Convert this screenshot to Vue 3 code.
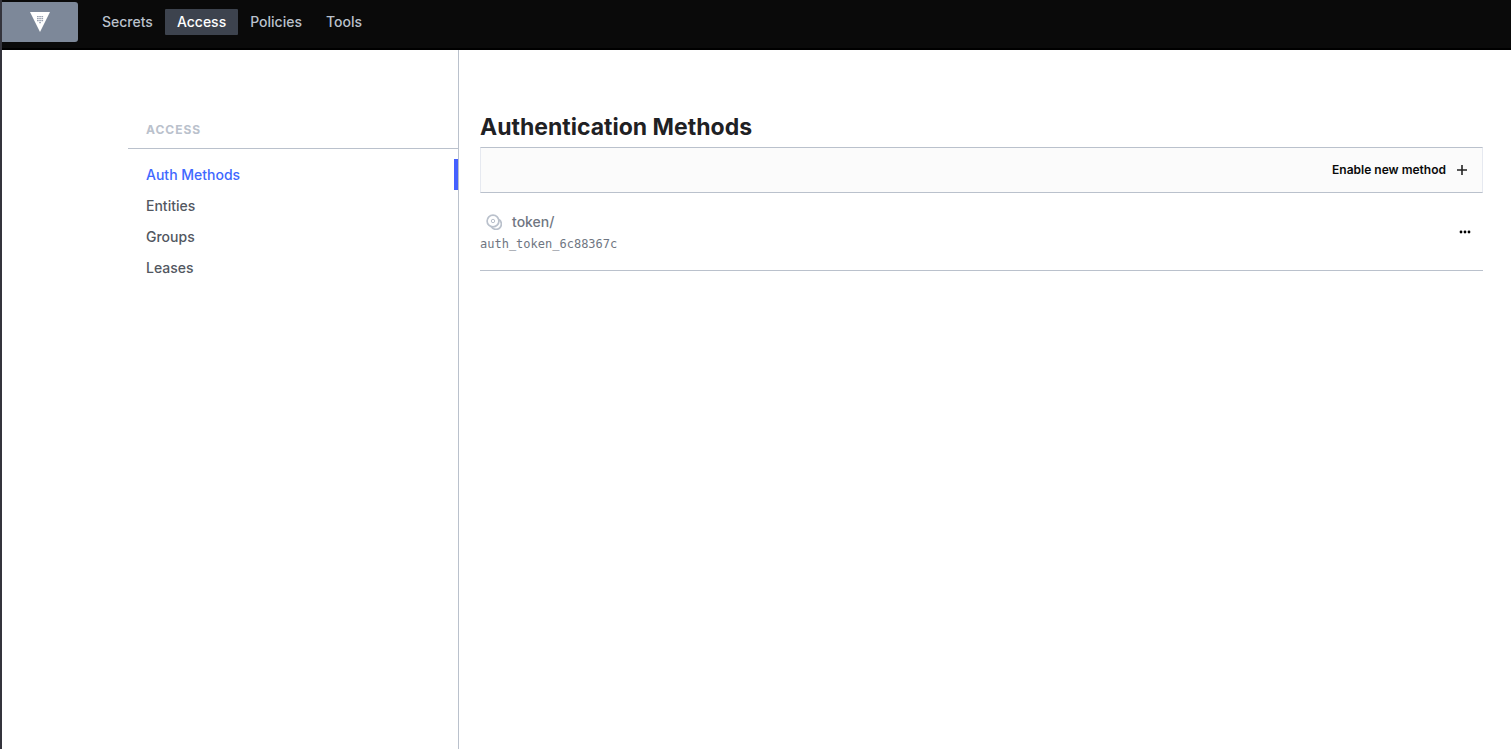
<script setup>
const topLinks = ['Secrets', 'Access', 'Policies', 'Tools']
const sideLinks = ['Auth Methods', 'Entities', 'Groups', 'Leases']
const methods = [{ path: 'token/', accessor: 'auth_token_6c88367c' }]
</script>

<template>
  <div class="app">
    <header class="topbar">
      <a href="#" class="logo" aria-label="Vault home">
        <svg width="20" height="20" viewBox="0 0 20 20" aria-hidden="true">
          <path d="M0 0H20L10 20Z" fill="#fff" />
          <path
            fill="#9aa2b1"
            d="M7 4h1.7v1.2H7zM9.200 4h1.7v1.2H9.200zM11.400 4h1.7v1.2h-1.7zM7 6h1.7v1.2H7zM9.200 6h1.7v1.2H9.200zM11.400 6h1.7v1.2h-1.7zM7 8h1.7v1.2H7zM9.200 8h1.7v1.2H9.200zM11.400 8h1.7v1.2h-1.7zM9.200 10h1.7v1.2H9.200z"
          />
        </svg>
      </a>
      <nav class="topnav" aria-label="Primary">
        <a v-for="l in topLinks" :key="l" href="#" :class="{ active: l === 'Access' }">{{ l }}</a>
      </nav>
    </header>
    <div class="body">
      <aside class="sidebar">
        <h2 class="side-title">Access</h2>
        <nav class="sidenav" aria-label="Access">
          <a v-for="l in sideLinks" :key="l" href="#" :class="{ active: l === 'Auth Methods' }">{{ l }}</a>
        </nav>
      </aside>
      <main class="main">
        <h1>Authentication Methods</h1>
        <div class="toolbar">
          <a href="#" class="enable">
            <span>Enable new method</span>
            <svg width="10" height="10" viewBox="0 0 10 10" aria-hidden="true">
              <path d="M5 0V10M0 5H10" stroke="#222" stroke-width="1.6" />
            </svg>
          </a>
        </div>
        <div v-for="m in methods" :key="m.path" class="row">
          <div class="info">
            <a href="#" class="path">
              <svg width="16" height="16" viewBox="0 0 16 16" fill="none" stroke="#bac1cc" aria-hidden="true">
                <circle cx="7" cy="7" r="5.9" stroke-width="1.7" />
                <circle cx="7" cy="7" r="1.7" stroke-width="1" />
                <path d="M13 5.500A5.400 5.400 0 1 1 5.500 13" stroke-width="1.7" />
              </svg>
              <span>{{ m.path }}</span>
            </a>
            <code>{{ m.accessor }}</code>
          </div>
          <button type="button" class="more" aria-label="More options">
            <svg width="12" height="4" viewBox="0 0 12 4" aria-hidden="true">
              <circle cx="2" cy="2" r="1.4" /><circle cx="6" cy="2" r="1.4" /><circle cx="10" cy="2" r="1.4" />
            </svg>
          </button>
        </div>
      </main>
    </div>
  </div>
</template>

<style>
body {
  background: #fff;
}
</style>

<style scoped>
.app {
  display: flex;
  flex-direction: column;
  box-sizing: border-box;
  min-height: 100vh;
  border-left: 2px solid #34343c;
  font-family: Inter, "Liberation Sans", sans-serif;
  font-size: 14px;
  font-weight: 500;
  line-height: 21px;
}
a {
  color: inherit;
  text-decoration: none;
}
.topbar {
  display: flex;
  box-sizing: border-box;
  height: 50px;
  padding-top: 2px;
  background: #0a0a0a;
  border-bottom: 2px solid #000;
}
.logo {
  display: flex;
  align-items: center;
  justify-content: center;
  width: 76px;
  height: 40px;
  background: #7d8899;
  border-radius: 0 3px 3px 0;
}
.topnav {
  display: flex;
  align-items: flex-start;
  padding: 7px 12px;
}
.topnav a {
  padding: 0 12px;
  color: #bac1cc;
  line-height: 26px;
  border-radius: 1px;
}
.topnav .active {
  background: #3d434e;
  color: #fff;
}
.body {
  display: flex;
  flex: 1;
}
.sidebar {
  flex: none;
  box-sizing: border-box;
  width: 457px;
  padding: 69px 0 0 126px;
  border-right: 1px solid #bac1cc;
}
.side-title {
  margin: 0;
  padding: 0 18px 8px;
  border-bottom: 1px solid #bac1cc;
  color: #bac1cc;
  font-size: 12px;
  font-weight: 700;
  letter-spacing: 1px;
  text-transform: uppercase;
}
.sidenav {
  display: flex;
  flex-direction: column;
  padding-top: 10px;
}
.sidenav a {
  padding: 0 14px 0 18px;
  border-right: 4px solid transparent;
  color: #525761;
  line-height: 31px;
}
.sidenav .active {
  border-right-color: #4561ff;
  color: #4068ff;
}
.main {
  flex: 1;
  padding: 62px 28px 0 21px;
}
h1 {
  margin: 0;
  padding-bottom: 5px;
  color: #1f2124;
  font-size: 23px;
  font-weight: 700;
  line-height: 30px;
}
.toolbar {
  display: flex;
  align-items: center;
  justify-content: flex-end;
  height: 44px;
  padding: 0 15px;
  background: #fbfbfb;
  border: 1px solid #bac1cc;
  border-right-color: #e6e9f0;
  border-left-color: #e6e9f0;
}
.enable {
  display: flex;
  align-items: center;
  gap: 11px;
  color: #0a0a0a;
  font-size: 12px;
  font-weight: 600;
  line-height: 20px;
}
.row {
  display: flex;
  align-items: center;
  justify-content: space-between;
  padding-right: 12px;
  border-bottom: 1px solid #bac1cc;
}
.info {
  padding: 18px 0 13px;
}
.path {
  display: flex;
  align-items: center;
  gap: 10px;
  padding-left: 6px;
  color: #6f7682;
}
code {
  display: block;
  color: #6f7682;
  font: 12px/25px "DejaVu Sans Mono", monospace;
}
.more {
  display: flex;
  padding: 0;
  border: 0;
  background: none;
}
</style>
